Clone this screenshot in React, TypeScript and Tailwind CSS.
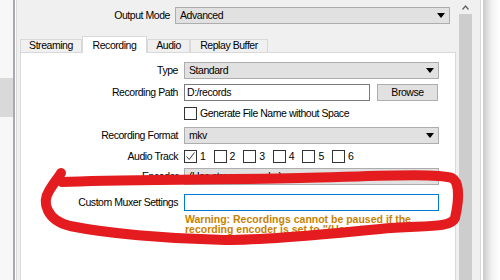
import type { ReactNode } from "react";

const DropArrow = () => (
  <svg width="8" height="5" viewBox="0 0 8 5" className="shrink-0">
    <path d="M0 0H8L4 5Z" fill="#000" />
  </svg>
);

const Combo = ({ value, className = "" }: { value: string; className?: string }) => (
  <div
    className={`flex h-[17px] items-center justify-between border border-[#adadad] bg-[#e1e1e1] pl-[4px] pr-[4px] ${className}`}
  >
    <span className="whitespace-nowrap">{value}</span>
    <DropArrow />
  </div>
);

const Label = ({ children }: { children: ReactNode }) => (
  <div className="w-[157px] shrink-0 whitespace-nowrap pr-0 text-right">{children}</div>
);

const Box = ({ checked = false }: { checked?: boolean }) => (
  <div className="flex h-[13px] w-[13px] shrink-0 items-center justify-center border border-[#333] bg-white">
    {checked && (
      <svg width="11" height="11" viewBox="0 0 11 11">
        <path d="M1.5 5.5L4.2 8.5L9.5 1.5" fill="none" stroke="#333" strokeWidth="1" />
      </svg>
    )}
  </div>
);

const tabs = [
  { label: "Streaming", w: "w-[62px]" },
  { label: "Recording", w: "w-[65px]", active: true },
  { label: "Audio", w: "w-[43px]" },
  { label: "Replay Buffer", w: "w-[78px]" }
];

export default function App() {
  return (
    <div className="relative flex h-[280px] w-[500px] overflow-hidden bg-[#f0f0f0] font-['Liberation_Sans',Arial,sans-serif] text-[10.5px] tracking-[-0.45px] text-black">
      {/* left list edge */}
      <div className="w-[13px] shrink-0 bg-[#f7f7f7]">
        <div className="mt-[78px] h-[39px] bg-[#d9d9d9]" />
      </div>
      <div className="w-[2px] shrink-0 bg-[#a9a9b2]" />
      <div className="w-[1px] shrink-0 bg-white" />
      <div className="w-[1px] shrink-0 bg-[#dadada]" />
      <div className="w-[3px] shrink-0 bg-[#f0f0f0]" />

      {/* main settings column */}
      <div className="flex w-[436px] shrink-0 flex-col">
        <div className="mt-[7px] flex h-[17px] items-center">
          <div className="w-[150px] whitespace-nowrap text-right">Output Mode</div>
          <Combo value="Advanced" className="ml-[5px] w-[275px] pr-[3px]" />
        </div>

        <div className="mt-[12px] flex h-[16px] items-end">
          {tabs.map((tab) =>
            tab.active ? (
              <div
                key={tab.label}
                className={`${tab.w} relative z-10 -mb-[1px] flex h-[17px] items-center justify-center border border-b-0 border-[#d9d9d9] bg-white pt-[2px]`}
              >
                {tab.label}
              </div>
            ) : (
              <div
                key={tab.label}
                className={`${tab.w} flex h-[13px] items-center justify-center border border-b-0 border-[#d9d9d9] bg-[#f0f0f0]`}
              >
                {tab.label}
              </div>
            )
          )}
        </div>

        <div className="flex-1 border border-b-0 border-[#d9d9d9] bg-white">
          <div className="mt-[9px] flex h-[17px] items-center">
            <Label>Type</Label>
            <Combo value="Standard" className="ml-[6px] w-[255px]" />
          </div>

          <div className="mt-[5px] flex h-[17px] items-center">
            <Label>Recording Path</Label>
            <div className="ml-[6px] flex h-[17px] w-[186px] items-center border border-[#7a7a7a] bg-white pl-[2px]">
              D:/records
            </div>
            <div className="ml-[7px] flex h-[17px] w-[61px] items-center justify-center border border-[#adadad] bg-[#e1e1e1]">
              Browse
            </div>
          </div>

          <div className="mt-[4px] flex h-[17px] items-center">
            <div className="w-[157px] shrink-0" />
            <div className="ml-[6px] flex items-center gap-[3px] whitespace-nowrap">
              <Box />
              <span>Generate File Name without Space</span>
            </div>
          </div>

          <div className="mt-[5px] flex h-[17px] items-center">
            <Label>Recording Format</Label>
            <Combo value="mkv" className="ml-[6px] w-[255px]" />
          </div>

          <div className="mt-[6px] flex h-[13px] items-center">
            <Label>Audio Track</Label>
            <div className="ml-[6px] flex items-center">
              {[1, 2, 3, 4, 5, 6].map((n) => (
                <div key={n} className="flex w-[29.6px] items-center gap-[3px]">
                  <Box checked={n === 1} />
                  <span>{n}</span>
                </div>
              ))}
            </div>
          </div>

          <div className="mt-[5px] flex h-[17px] items-center">
            <Label>Encoder</Label>
            <Combo value="(Use stream encoder)" className="ml-[6px] w-[255px]" />
          </div>

          <div className="mt-[9px] flex h-[17px] items-center">
            <Label>Custom Muxer Settings</Label>
            <div className="ml-[6px] h-[17px] w-[255px] border border-[#0078d7] bg-white" />
          </div>

          <div className="mt-[3px] flex">
            <div className="w-[157px] shrink-0" />
            <div className="ml-[7px] whitespace-nowrap text-[10.5px] font-bold leading-[10px] tracking-normal text-[#c98200]">
              Warning: Recordings cannot be paused if the
              <br />
              recording encoder is set to "(Use stream
              <br />
              encoder)"
            </div>
          </div>
        </div>
      </div>

      {/* scrollbar */}
      <div className="flex w-[24px] shrink-0 flex-col bg-[#f0f0f0] pl-[3px]">
        <div className="flex h-[14px] w-[13px] items-center justify-center">
          <svg width="7" height="5" viewBox="0 0 7 5">
            <path d="M0.5 4.5L3.5 1L6.5 4.5" fill="none" stroke="#606060" strokeWidth="1.2" />
          </svg>
        </div>
        <div className="w-[13px] flex-1 bg-[#cdcdcd]" />
      </div>
      <div className="w-[1px] shrink-0 bg-[#dadada]" />
      <div className="w-[2px] shrink-0 bg-white" />
      <div className="w-[17px] shrink-0 bg-gradient-to-r from-[#cbcbcb] via-[#f1f1f1] to-white" />

      {/* red hand-drawn annotation */}
      <svg
        className="pointer-events-none absolute left-0 top-0"
        width="500"
        height="280"
        viewBox="0 0 500 280"
      >
        <path
          d="M62 182 C 110 180, 200 180, 300 178 C 380 176, 436 173, 452 178 C 461 183, 458 205, 455 218 C 451 229, 420 225, 380 229 C 330 234, 270 240, 225 240 C 165 239, 105 233, 70 226 C 46 220, 42 202, 49 191 C 53 184, 58 178, 61 173"
          fill="none"
          stroke="#e41c1f"
          strokeWidth="10"
          strokeLinecap="round"
          strokeLinejoin="round"
        />
      </svg>
    </div>
  );
}
